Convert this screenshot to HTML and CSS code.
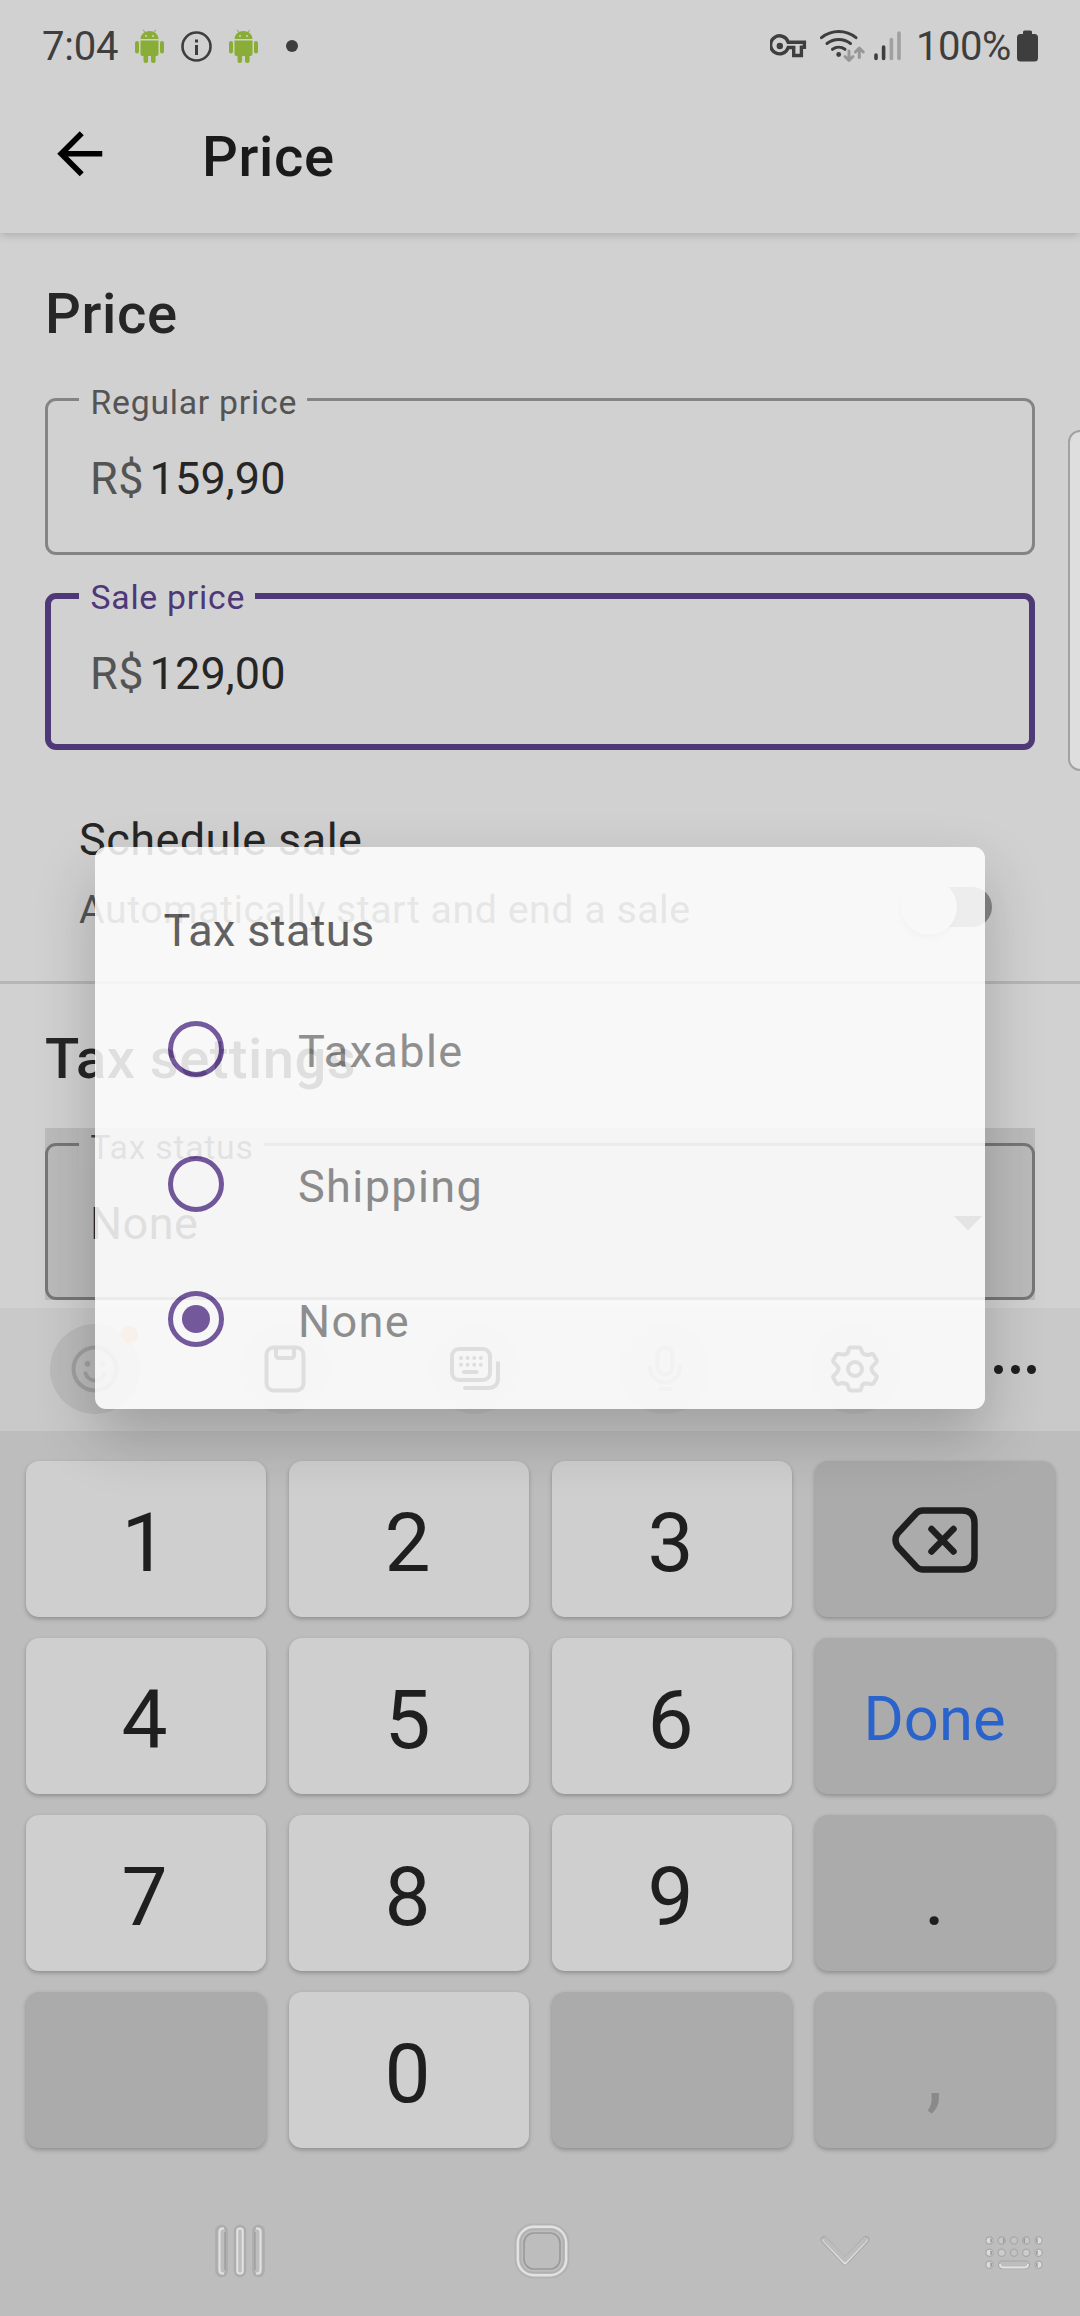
FILE: index.html
```html
<!DOCTYPE html>
<html lang="en">
<head>
<meta charset="utf-8">
<title>Price</title>
<link rel="stylesheet" href="styles.css">
</head>
<body>
<svg class="defs" width="0" height="0" aria-hidden="true">
  <symbol id="android" viewBox="0 0 29 34">
    <path d="M5.5 10a9 8 0 0 1 18 0zM5.5 11.4h18V25a2 2 0 0 1-2 2h-14a2 2 0 0 1-2-2z"/>
    <rect x="0" y="12" width="4" height="12.5" rx="2"/><rect x="25" y="12" width="4" height="12.5" rx="2"/>
    <rect x="8.5" y="23" width="4.6" height="11" rx="2"/><rect x="16" y="23" width="4.6" height="11" rx="2"/>
    <path d="M8.2.8l2.4 3.6M20.8.8l-2.4 3.6" stroke="#89ad36" stroke-width="1" fill="none"/>
    <circle cx="11" cy="7" r="1" fill="#d1d1d1"/><circle cx="18" cy="7" r="1" fill="#d1d1d1"/>
  </symbol>
</svg>
<div class="screen">
  <header class="status">
    <span class="time">7:04</span>
    <svg class="bot" width="29" height="34"><use href="#android"/></svg>
    <svg class="info" width="31" height="31" viewBox="0 0 31 31"><circle cx="15.5" cy="15.5" r="14" fill="none" stroke="#3e3e3e" stroke-width="2.6"/><path d="M14 14h3v10h-3zM14 8.5h3v3h-3z" fill="#3e3e3e"/></svg>
    <svg class="bot" width="29" height="34"><use href="#android"/></svg>
    <span class="dot"></span>
    <svg class="sys" width="132" height="36" viewBox="770 29 132 36" fill="none">
      <path d="M796 43.200h8.400v5h-3v8.300h-7.700v-8h-5.500a9 9 0 1 1 0-5.300z" stroke="#3e3e3e" stroke-width="3.400"/>
      <circle cx="779.800" cy="47" r="3.200" fill="#3e3e3e"/>
      <g stroke="#3e3e3e" stroke-width="3" stroke-linecap="round"><path d="M821.500 38.700a27 27 0 0 1 34.500 0M827 44.500a19 19 0 0 1 23.500 0M832.500 50.300a10.500 10.500 0 0 1 12.500 0"/></g>
      <circle cx="838.700" cy="55.500" r="2.400" fill="#3e3e3e"/>
      <path d="M849 52v8.500M845 57.500l4 3.800 4-3.800M859.300 58.500V50M855.300 53l4-3.800 4 3.800" stroke="#979797" stroke-width="3" stroke-linecap="round" stroke-linejoin="round"/>
      <g stroke-width="3.600" stroke-linecap="round"><path d="M876 56v3.500M883.600 48v11.500" stroke="#3e3e3e"/><path d="M891.400 40.500v19M899 34v25.500" stroke="#a0a0a0"/></g>
    </svg>
    <span class="pct">100%</span>
    <svg class="batt" width="21" height="32" viewBox="0 0 21 32"><path d="M6 4V2a1.500 1.500 0 0 1 1.500-1.500h6A1.500 1.500 0 0 1 15 2v2h2.500A3.500 3.500 0 0 1 21 7.500v20.500a3.500 3.500 0 0 1-3.500 3.500h-14A3.500 3.500 0 0 1 0 28V7.500A3.500 3.500 0 0 1 3.500 4z" fill="#3e3e3e"/></svg>
  </header>
  <div class="appbar">
    <svg width="67.500" height="67.500" viewBox="0 0 24 24"><path d="M20 11H7.830l5.590-5.590L12 4l-8 8 8 8 1.410-1.410L7.830 13H20z"/></svg>
    <h1>Price</h1>
  </div>
  <main class="content">
    <h2>Price</h2>
    <div class="field"><label>Regular price</label><span class="cur">R$</span><span class="num">159,90</span></div>
    <div class="field active"><label>Sale price</label><span class="cur">R$</span><span class="num">129,00</span></div>
    <div class="schedule">
      <div><p class="name">Schedule sale</p><p class="hint">Automatically start and end a sale</p></div>
      <div class="switch"><i></i></div>
    </div>
    <h2 class="tax">Tax settings</h2>
    <div class="pressed">
      <div class="field"><label>Tax status</label><span>None</span><svg width="28" height="15" viewBox="0 0 28 15"><path d="M0 0h28L14 14.500z" fill="#484848"/></svg></div>
    </div>
  </main>
  <section class="tools">
    <div class="tool emoji">
      <svg class="smile" width="48" height="48" viewBox="0 0 48 48"><circle cx="24" cy="24" r="21.500"/><path d="M14.500 28.500a10 10 0 0 0 19 0"/><circle class="fill" cx="16.500" cy="18.800" r="2.800"/><circle class="fill" cx="31.500" cy="18.800" r="2.800"/></svg>
      <b class="badge"></b>
    </div>
    <div class="tool"><svg width="48" height="48" viewBox="0 0 48 48"><rect x="5.500" y="2.500" width="37" height="43" rx="7"/><path d="M15 3v7q0 3 3 3h12q3 0 3-3V3"/></svg></div>
    <div class="tool"><svg width="54" height="48" viewBox="0 0 54 48"><rect x="4" y="4" width="38" height="31" rx="7"/><path d="M50 18v15q0 10-10 10H17M16 27h12.500"/><path class="keysdots" d="M13 13h.01M19.600 13h.01M26.200 13h.01M32.800 13h.01M13 19.700h.01M19.600 19.700h.01M26.200 19.700h.01M32.800 19.700h.01"/></svg></div>
    <div class="tool"><svg class="mic" width="48" height="48" viewBox="0 0 48 48"><rect x="16.500" y="2.500" width="15" height="27" rx="7.500"/><path d="M9 22a15 15.500 0 0 0 30 0M19 44h10.500"/></svg></div>
    <div class="tool"><svg width="48" height="48" viewBox="0 0 48 48"><circle cx="24" cy="24" r="7"/><path d="M20 2.500h8q2 0 2.500 3t3.500 4 6-.6q2-.4 3 1.500l2.500 4.300q1 2-1 3.500-4 3.300-4 5.800t4 5.800q2 1.500 1 3.500l-2.500 4.300q-1 1.900-3 1.500-3-1-6-.6t-3.500 4-2.500 3h-8q-2 0-2.500-3t-3.500-4-6 .6q-2 .4-3-1.500l-2.500-4.300q-1-2 1-3.500 4-3.300 4-5.800t-4-5.800q-2-1.500-1-3.500L5 10.400q1-1.900 3-1.500 3 1 6 .6t3.500-4 2.500-3z"/></svg></div>
    <div class="more"><i></i><i></i><i></i></div>
  </section>
  <section class="keys">
    <button>1</button><button>2</button><button>3</button>
    <button class="fn"><svg width="86" height="66" viewBox="0 0 86 66"><path d="M31 3.500h39q12.500 0 12.500 12.500v34q0 12.500-12.500 12.500H31q-4 0-6.500-2.500L5.500 39.500q-4-6.500 0-13L24.500 6Q27 3.500 31 3.500zM39.500 22l22 22.500M61.500 22l-22 22.500"/></svg></button>
    <button>4</button><button>5</button><button>6</button><button class="fn done">Done</button>
    <button>7</button><button>8</button><button>9</button><button class="fn">.</button>
    <button class="fn"></button><button>0</button><button class="fn"></button><button class="fn off">,</button>
  </section>
  <nav class="nav">
    <svg width="50" height="54" viewBox="0 0 50 54" fill="none">
      <g stroke="#adadad" stroke-width="2.600"><rect x="1.500" y="2" width="10" height="50" rx="5"/><rect x="20" y="2" width="10" height="50" rx="5"/><rect x="38.500" y="2" width="10" height="50" rx="5"/></g>
      <g stroke="#e2e2e2" stroke-width="2"><path d="M9 4.500H7.500q-3 0-3 4v37q0 4 3 4H9M41 4.500h1.500q3 0 3 4v37q0 4-3 4H41"/><rect x="22.300" y="4.500" width="5.400" height="45" rx="2.500"/></g>
      <path d="M10 8v38M40 8v38" stroke="#999" stroke-width="1.200"/>
    </svg>
    <svg class="home" width="56" height="56" viewBox="0 0 56 56" fill="none"><rect x="1.500" y="1.500" width="53" height="53" rx="18" stroke="#b3b3b3" stroke-width="2"/><rect x="3.800" y="3.800" width="48.400" height="48.400" rx="16" stroke="#e2e2e2" stroke-width="2.400"/><rect x="6.500" y="6.500" width="43" height="43" rx="13" stroke="#b0b0b0" stroke-width="1.500"/><rect x="10" y="10" width="36" height="36" rx="10" stroke="#999" stroke-width="1.600"/></svg>
    <svg class="down" width="50" height="32" viewBox="0 0 50 32" fill="none" stroke-linejoin="round" stroke-linecap="round"><path d="M4 4.500l21 22 21-22" stroke="#aaa" stroke-width="7"/><path d="M4 5l21 22.500L46 5" stroke="#e2e2e2" stroke-width="4"/><path d="M5 4.500l20 20.500L45 4.500" stroke="#bdbdbd" stroke-width="4.500"/></svg>
    <svg class="kbd" width="58" height="34" viewBox="0 0 58 34" fill="#dcdcdc" stroke="#a8a8a8" stroke-width="1.200">
      <circle cx="4.500" cy="4.500" r="3.600"/><circle cx="16.700" cy="4.500" r="3.600" fill="#c8c8c8"/><circle cx="29" cy="4.500" r="3.600" fill="#c4c4c4"/><circle cx="41.200" cy="4.500" r="3.600" fill="#c8c8c8"/><circle cx="53.500" cy="4.500" r="3.600"/>
      <circle cx="4.500" cy="16.700" r="3.600"/><circle cx="16.700" cy="16.700" r="3.600" fill="#ccc"/><circle cx="29" cy="16.700" r="3.600" fill="#c2c2c2"/><circle cx="41.200" cy="16.700" r="3.600" fill="#ccc"/><circle cx="53.500" cy="16.700" r="3.600"/>
      <circle cx="4.500" cy="28.800" r="3.600"/><circle cx="53.500" cy="28.800" r="3.600"/>
      <rect x="13.500" y="25" width="31" height="7.600" rx="3.800" fill="#bdbdbd"/>
      <path d="M15 28q0 3.500 3 3.500h22q3 0 3-3.500" fill="none" stroke="#e2e2e2" stroke-width="1.800"/>
      <path d="M5.500 2.500a2.500 2.500 0 0 1 0 4M52.500 2.500a2.500 2.500 0 0 0 0 4M5.500 14.700a2.500 2.500 0 0 1 0 4M52.500 14.700a2.500 2.500 0 0 0 0 4M5.500 26.800a2.500 2.500 0 0 1 0 4M52.500 26.800a2.500 2.500 0 0 0 0 4M18 2.500a2.500 2.500 0 0 1 0 4M40 2.500a2.500 2.500 0 0 0 0 4" fill="#999" stroke="#999"/>
    </svg>
  </nav>
  <div class="edge"></div>
  <div class="dialog">
    <h3>Tax status</h3>
    <div class="option"><i class="radio"></i><span>Taxable</span></div>
    <div class="option"><i class="radio"></i><span>Shipping</span></div>
    <div class="option"><i class="radio on"></i><span>None</span></div>
  </div>
</div>
</body>
</html>
```
FILE: styles.css
```css
* { box-sizing: border-box; margin: 0; padding: 0; }
body { font-family: Roboto, "Noto Sans", sans-serif; background: #d1d1d1; }
svg { display: block; flex: none; }
.defs { position: absolute; }

.screen {
  position: relative;
  width: 1080px;
  height: 2316px;
  display: flex;
  flex-direction: column;
  overflow: hidden;
  background: #d1d1d1;
}

/* status bar */
.status {
  position: relative;
  z-index: 1;
  height: 92px;
  flex: none;
  padding: 0 42px;
  display: flex;
  align-items: center;
  background: #d1d1d1;
  font-size: 40px;
  line-height: 92px;
  color: #3e3e3e;
}
.time { width: 93px; padding-top: 2px; letter-spacing: -0.2px; }
.bot { fill: #89ad36; }
.info { margin: 0 17px; }
.dot { width: 12px; height: 12px; margin-left: 28px; border-radius: 50%; background: #3e3e3e; }
.sys { margin-left: auto; margin-right: 14px; }
.pct { width: 101px; padding-top: 2px; letter-spacing: -0.5px; white-space: nowrap; }

/* app bar */
.appbar {
  position: relative;
  height: 141px;
  flex: none;
  padding: 28px 0 0 46px;
  display: flex;
  gap: 88.500px;
  box-shadow: 0 2px 9px rgba(0, 0, 0, 0.18);
  background: #d1d1d1;
}
h1, h2 { font-size: 56.25px; font-weight: 500; line-height: 66px; letter-spacing: 0.6px; }
h1 { color: #1a1a1a; padding-top: 4px; }
h2 { color: #262626; }

/* form */
.content { height: 1075px; flex: none; padding: 48px 45px 0; overflow: hidden; }
.field {
  position: relative;
  height: 157px;
  margin-top: 51px;
  padding: 0 42px;
  display: flex;
  gap: 5.500px;
  border: 3px solid rgba(0, 0, 0, 0.37);
  border-radius: 11px;
  font-size: 45px;
  line-height: 155px;
  letter-spacing: 0.5px;
  color: #262626;
}
.field label {
  position: absolute;
  left: 31px;
  top: -18px;
  padding: 0 10px 0 11.500px;
  background: #d1d1d1;
  font-size: 33.75px;
  line-height: 40px;
  letter-spacing: 0.75px;
  color: #545454;
  white-space: nowrap;
}
.field .cur { color: #545454; }
.field .num { letter-spacing: 0.15px; }
.field.active { margin-top: 38px; padding: 0 39px; border: 6px solid #4f3878; line-height: 149px; }
.field.active label { left: 28px; top: -21px; color: #4f3878; }

.schedule {
  margin: 60px -45px 0;
  height: 174px;
  padding: 0 88px 0 79px;
  display: flex;
  justify-content: space-between;
  border-bottom: 3px solid #b6b6b6;
}
.name { font-size: 45px; line-height: 60px; letter-spacing: 0.45px; color: #262626; }
.hint { margin-top: 13px; font-size: 39.375px; line-height: 54px; letter-spacing: 0.5px; color: #545454; }
.switch { width: 84px; height: 40px; margin-top: 77px; border-radius: 20px; background: #868686; }
.switch i {
  display: block;
  width: 56px;
  height: 56px;
  margin: -8px 0 0 -7px;
  border-radius: 50%;
  background: #d1d1d1;
  box-shadow: 0 3px 5px rgba(0, 0, 0, 0.2);
}
.tax { margin-top: 42px; letter-spacing: 0.4px; }
.pressed { margin-top: 36px; padding-top: 15px; background: rgba(0, 0, 0, 0.1); }
.pressed .field { margin-top: 0; justify-content: space-between; padding-right: 50px; }
.pressed .field label { background: #bcbcbc; color: #3c3c3c; }
.pressed svg { margin-top: 70px; }

/* keyboard toolbar */
.tools {
  height: 123px;
  flex: none;
  padding: 16px 0 0 50px;
  display: flex;
  gap: 100px;
  background: #c9c9c9;
}
.tool {
  position: relative;
  width: 90px;
  height: 90px;
  flex: none;
  display: flex;
  align-items: center;
  justify-content: center;
  border-radius: 50%;
  background: #c1c1c1;
}
.tool.emoji { background: #bbb; }
.tool svg { fill: none; stroke: #1f1f1f; stroke-width: 4; stroke-linecap: round; stroke-linejoin: round; }
.tool .smile { stroke: #a0a0a0; }
.tool .mic { stroke: #a8a8a8; }
.tool .smile .fill { fill: #a0a0a0; stroke: none; }
.tool .badge { position: absolute; left: 71px; top: 2px; width: 17px; height: 17px; border-radius: 50%; background: #d09a74; }
.more { display: flex; gap: 7.500px; margin: 40.500px 0 0 -6px; }
.more i { width: 9px; height: 9px; border-radius: 50%; background: #1f1f1f; }

/* number keys */
.keys {
  position: relative;
  z-index: 1;
  flex: none;
  height: 717px;
  padding: 30px 25.500px 0 25.600px;
  display: grid;
  grid-template-columns: repeat(4, 240px);
  grid-auto-rows: 156px;
  justify-content: space-between;
  row-gap: 21px;
}
.keys button {
  border: 0;
  border-radius: 13px;
  display: flex;
  align-items: center;
  justify-content: center;
  padding: 8px 2px 0 0;
  background: #cfcfcf;
  box-shadow: 0 2px 4px rgba(0, 0, 0, 0.25);
  font: 400 82px/96px Roboto, sans-serif;
  color: #1f1f1f;
}
.keys .fn { padding-right: 0; background: #ababab; }
.keys .fn svg { margin-top: -7px; fill: none; stroke: #1f1f1f; stroke-width: 6.500; stroke-linecap: round; }
.keys .done { font-size: 61.500px; padding-top: 5px; color: #2b63cc; }
.keys .off { color: #8a8a8a; }

/* navigation bar */
.nav { flex: 1; padding: 38px 0 0 215px; display: flex; align-items: center; }
.keys, .nav { background-color: #bdbdbd; }
.home { margin-left: 249px; }
.down { margin-left: 250px; }
.kbd { margin-left: 115px; margin-top: 3px; }

/* side panel handle */
.edge {
  position: absolute;
  z-index: 2;
  right: -14px;
  top: 430px;
  width: 26px;
  height: 341px;
  border: 2px solid #a2a2a2;
  border-radius: 12px;
  background: #dedede;
}

/* tax status dialog */
.dialog {
  position: absolute;
  z-index: 2;
  left: 95px;
  top: 847px;
  width: 890px;
  height: 562px;
  padding: 51px 68.500px 0;
  border-radius: 11px;
  background: #fff;
  opacity: 0.854;
  box-shadow: 0 27px 60px rgba(0, 0, 0, 0.245);
}
.dialog h3 { margin-bottom: 17.500px; font-size: 45px; font-weight: 400; line-height: 66px; letter-spacing: 0.35px; color: #4f4f4f; }
.option { height: 135px; padding-left: 4.500px; display: flex; align-items: center; gap: 74px; font-size: 45px; letter-spacing: 1.4px; color: #848484; }
.option span { padding-top: 5px; }
.radio { width: 56px; height: 56px; border: 5.500px solid #654595; border-radius: 50%; display: flex; align-items: center; justify-content: center; }
.radio.on::before { content: ""; width: 28px; height: 28px; border-radius: 50%; background: #654595; }
```
